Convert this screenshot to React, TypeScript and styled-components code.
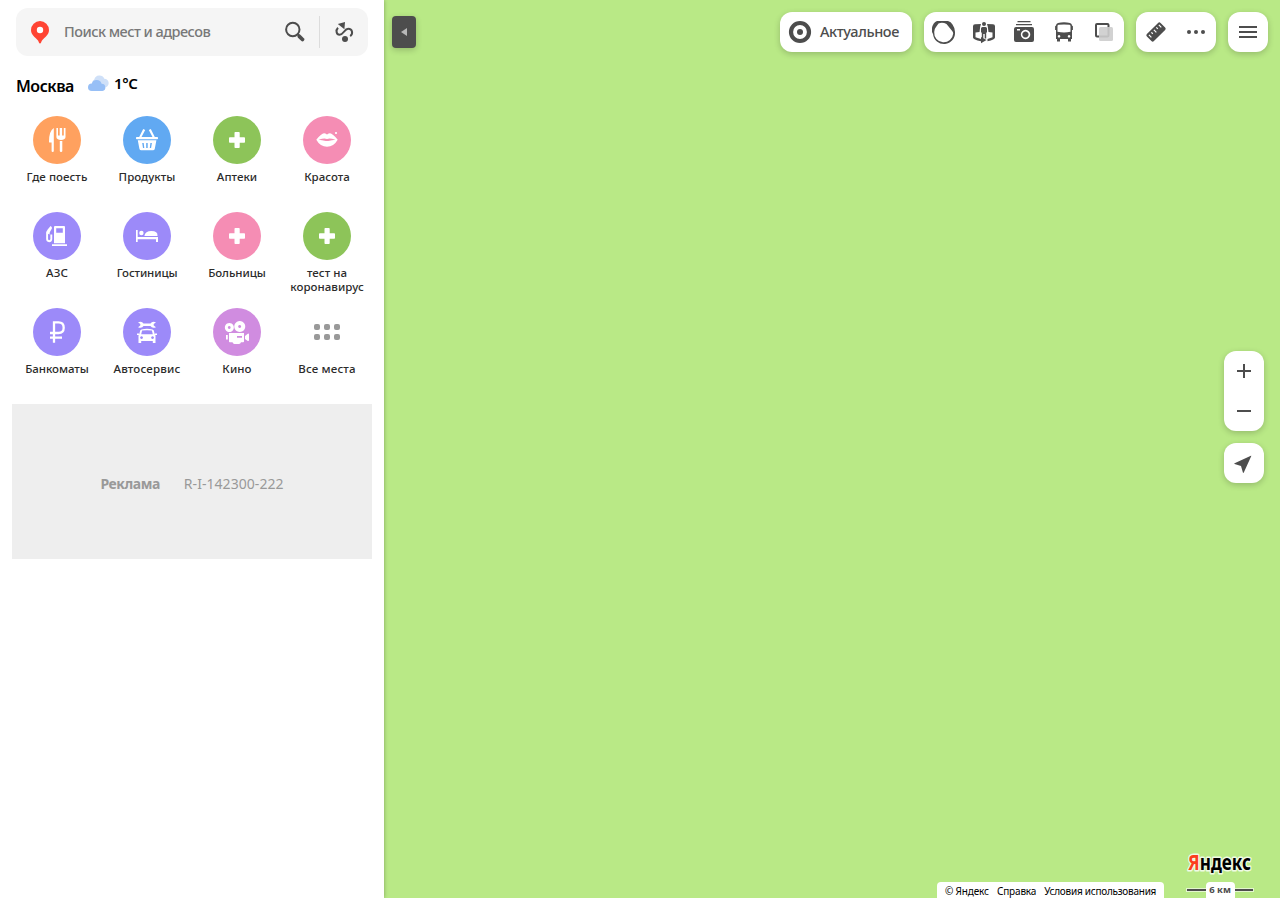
import React from "react";
import styled, { createGlobalStyle } from "styled-components";

const INK = "#4d4d4d";
const SHADOW = "0 2px 6px rgba(0, 0, 0, 0.2)";

const GlobalStyle = createGlobalStyle`
  * { box-sizing: border-box; }
  body { margin: 0; background: #fff; overflow: hidden; font-family: "Noto Sans", "Open Sans", sans-serif; }
  svg { display: block; flex: none; overflow: visible; }
  button { border: 0; padding: 0; margin: 0; background: none; font: inherit; color: inherit; }
`;

const Page = styled.div`
  display: flex;
  width: 1280px;
  height: 898px;
`;

const Sidebar = styled.aside`
  width: 384px;
  flex: none;
  padding: 8px 12px 0;
  background: #fff;
  box-shadow: 0 0 4px rgba(0, 0, 0, 0.3);
  z-index: 1;
`;

const SearchBar = styled.div`
  display: flex;
  align-items: center;
  height: 48px;
  margin: 0 4px;
  border-radius: 12px;
  background: #f5f5f5;
`;

const Placeholder = styled.span<{ $ls: number }>`
  flex: 1;
  padding-bottom: 2px;
  color: #787878;
  font-size: 14.5px;
  font-weight: 500;
  letter-spacing: ${(p) => p.$ls}px;
  white-space: nowrap;
`;

const Divider = styled.i`
  width: 1px;
  height: 32px;
  background: #dcdcdc;
`;

const CityRow = styled.div`
  display: flex;
  height: 60px;
  padding: 0 4px;
`;

const City = styled.span<{ $ls: number }>`
  width: 72px;
  padding-top: 20px;
  font-size: 16px;
  line-height: 20px;
  font-weight: 600;
  letter-spacing: ${(p) => p.$ls}px;
`;

const Weather = styled.span`
  display: flex;
  gap: 6px;
  padding-top: 17px;
  height: 38px;
  font-size: 15px;
  line-height: 20px;
  font-weight: 600;
  letter-spacing: -0.3px;
`;

const Categories = styled.div`
  display: grid;
  grid-template-columns: repeat(4, 90px);
  grid-auto-rows: 96px;
`;

const Category = styled.button`
  display: flex;
  flex-direction: column;
  align-items: center;
  gap: 6px;
`;

const Disc = styled.span<{ $color: string }>`
  width: 48px;
  height: 48px;
  border-radius: 50%;
  background: ${(p) => p.$color};
`;

const Label = styled.span<{ $ls: number }>`
  color: #2b2b2b;
  font-size: 11.5px;
  line-height: 14px;
  font-weight: 550;
  letter-spacing: ${(p) => p.$ls}px;
  text-align: center;
  white-space: pre;
`;

const Ad = styled.div`
  display: flex;
  align-items: center;
  justify-content: center;
  gap: 24px;
  height: 155px;
  padding-top: 4px;
  background: #eee;
  color: #999;
  font-size: 14px;
  line-height: 20px;
`;

const AdTitle = styled.b`
  font-weight: 700;
  letter-spacing: -0.45px;
`;

const AdCode = styled.span`
  letter-spacing: 0.05px;
`;

const MapArea = styled.main`
  flex: 1;
  display: flex;
  flex-direction: column;
  justify-content: space-between;
  background: #b9e986;
`;

const TopBar = styled.div`
  display: flex;
  gap: 12px;
  padding: 12px 12px 0 8px;
`;

const Collapse = styled.button`
  display: flex;
  align-items: center;
  justify-content: center;
  width: 24px;
  height: 32px;
  margin: 4px auto 0 0;
  border-radius: 4px;
  background: ${INK};
  box-shadow: ${SHADOW};
`;

const Panel = styled.div<{ $vertical?: boolean }>`
  display: flex;
  flex-direction: ${(p) => (p.$vertical ? "column" : "row")};
  align-items: center;
  border-radius: 12px;
  background: #fff;
  box-shadow: ${SHADOW};
`;

const PanelText = styled.span<{ $ls: number }>`
  width: 92px;
  padding-bottom: 2px;
  color: ${INK};
  font-size: 14.5px;
  font-weight: 550;
  letter-spacing: ${(p) => p.$ls}px;
  white-space: nowrap;
`;

const SideControls = styled.div`
  display: flex;
  flex-direction: column;
  gap: 12px;
  align-self: flex-end;
  margin: 299px 16px auto 0;
`;

const BottomBar = styled.footer`
  display: flex;
  align-items: flex-end;
  justify-content: flex-end;
  gap: 22px;
  padding-right: 26px;
`;

const Copyrights = styled.div`
  display: flex;
  gap: 8px;
  width: 227px;
  height: 16px;
  padding: 0 8px;
  border-radius: 4px 4px 0 0;
  background: #fff;
  color: #000;
  font-size: 10px;
  line-height: 18px;
  white-space: nowrap;
`;

const Notice = styled.span<{ $ls: number }>`
  letter-spacing: ${(p) => p.$ls}px;
`;

const Brand = styled.div`
  display: flex;
  flex-direction: column;
  align-items: center;
  width: 68px;
`;

const Scale = styled.div`
  display: flex;
  align-items: center;
  width: 68px;
  height: 16px;
  padding: 0 1px;
`;

const ScaleLine = styled.i`
  flex: 1;
  height: 2px;
  background: ${INK};
  box-shadow: 0 0 0 1px rgba(255, 255, 255, 0.6);
`;

const ScaleText = styled.span`
  width: 29px;
  height: 16px;
  border-radius: 4px 4px 0 0;
  background: #fff;
  color: ${INK};
  font-size: 9.5px;
  line-height: 15px;
  font-weight: 700;
  text-align: center;
  white-space: nowrap;
`;

const Tool = ({ children }: { children: React.ReactNode }) => (
  <svg width="40" height="40" viewBox="0 0 40 40" fill={INK}>{children}</svg>
);

const plus = <path d="M22.300 16h3.600q.8 0 .8.8v4.500h4.500q.8 0 .8.8v3.800q0 .8-.8.8h-4.500v4.500q0 .8-.8.8h-3.600q-.8 0-.8-.8v-4.500h-4.700q-.8 0-.8-.8v-3.800q0-.8.8-.8h4.700v-4.500q0-.8.8-.8z" />;

const PURPLE = "#9c8af9";
const GREEN = "#8dc459";
const PINK = "#f58db4";

const categories: { label: string; color: string; ls: number; icon: React.ReactNode }[] = [
  {
    label: "Где поесть", color: "#ffa15f", ls: 0.05,
    icon: (
      <>
        <path d="M20.800 12v23q0 1-1.100 1t-1.100-1v-8.500H16.400q-.5 0-.4-1Q16 15 20.800 12z" />
        <path d="M23.400 12h1.600v7.500h1.700V12h2.400v7.500h1.700V12h1.700v9q0 2.500-4.500 3-4.600-.5-4.600-3zM26.800 25h2.500v10q0 1-1.250 1t-1.250-1z" />
      </>
    ),
  },
  {
    label: "Продукты", color: "#61a9f2", ls: 0.05,
    icon: (
      <>
        <path d="m20.200 13 2 1-3.700 7h-2.300zM27.800 13l-2 1 3.700 7h2.300z" />
        <rect x="13" y="21" width="22" height="2.300" rx=".8" />
        <path fillRule="evenodd" d="M14.800 24.300h18.600l-1.600 8.400q-.3 1.600-1.900 1.600H18.300q-1.600 0-1.900-1.600zM19.200 27l.8 5h1.300l-.6-5zm4 0v5h1.500v-5zm4.200 0-.6 5h1.300l.8-5z" />
      </>
    ),
  },
  { label: "Аптеки", color: GREEN, ls: 0.02, icon: plus },
  {
    label: "Красота", color: PINK, ls: 0.02,
    icon: (
      <>
        <path d="M13.300 23.800q5.200-6.500 7.700-6.500 1.200 0 3 1.100 1.800-1.100 3-1.100 2.500 0 7.700 6.500-4 7-10.700 7t-10.700-7z" />
        <path fill={PINK} d="M15.500 23.800q4-1.200 6-1.200 1 .1 2.500.5 1.500-.4 2.500-.5 2 0 6 1.200-4 .5-6 .9-2.500.5-5 0-2-.4-6-.9z" />
        <circle cx="33" cy="17" r="1.100" />
      </>
    ),
  },
  {
    label: "АЗС", color: PURPLE, ls: 0.1,
    icon: (
      <>
        <path fillRule="evenodd" d="M22 14h9q1 0 1 1v16.300H21V15q0-1 1-1zm1.200 2.200v4.500h6.600v-4.500zM19 32.200h15V34H19z" />
        <path d="m18.300 14.600-3.300 4q-.9 1-.9 2.500v6q0 2.100 2 2.100t2.200-2V22.500" fill="none" stroke="#fff" strokeWidth="1.900" />
        <path d="m17.500 15 1.500 1.300-1.800 3.300q-.7 1.200-.7 3L13.300 21z" />
      </>
    ),
  },
  {
    label: "Гостиницы", color: PURPLE, ls: -0.12,
    icon: (
      <>
        <path d="M13 18h1.700v7H35v5h-2v-2.700H14.700V30H13z" />
        <circle cx="18.400" cy="21" r="2.200" />
        <path d="M21.300 24q1-5 7-5 6.700 0 6.200 5z" />
      </>
    ),
  },
  { label: "Больницы", color: PINK, ls: -0.05, icon: plus },
  { label: "тест на\nкоронавирус", color: GREEN, ls: 0.05, icon: plus },
  {
    label: "Банкоматы", color: PURPLE, ls: -0.05,
    icon: <path d="M21 34.700V14.400h4.500q5.200 0 5.200 5.300t-5.200 5.300H17M17 29.700h12" fill="none" stroke="#fff" strokeWidth="2.300" />,
  },
  {
    label: "Автосервис", color: PURPLE, ls: 0.2,
    icon: (
      <>
        <path d="M15 14.200q4-1.500 5.500 1.400h7q1.500-2.900 5.500-1.400l-2.300 1.700v1.700L33 19.300q-4 1.500-5.500-1.200h-7q-1.500 2.700-5.500 1.200l2.300-1.700v-1.700z" />
        <path fillRule="evenodd" d="M18.500 21.400q5.500-1.100 11 0 1 .2 1.300 1.200l.9 3.400q.8.700.8 2v7h-2.700v-2H18.200v2h-2.700v-7q0-1.300.8-2l.9-3.400q.3-1 1.300-1.200zm.6 1.200-.9 3.600h11.600l-.9-3.600q-4.900-.8-9.800 0zm-.6 5.600a1.400 1.400 0 1 0 .1 0zm11 0a1.400 1.400 0 1 0 .1 0z" />
        <path d="M14 25.500h2v1.600h-2zM32 25.500h2v1.600h-2z" />
      </>
    ),
  },
  {
    label: "Кино", color: "#d08ce0", ls: 0.1,
    icon: (
      <>
        <path fillRule="evenodd" d="M16.300 15a4.500 4.500 0 1 0 .1 0zm0 3.100a1.400 1.400 0 1 1-.1 0zM26.700 13a5.500 5.500 0 1 0 .1 0zm0 3.900a1.500 1.500 0 1 1-.1 0zM16 25h15v8.500q0 .8-.8.800H28q-.5 1.700-2 1.700h-4.500q-1.500 0-2-1.700h-2.700q-.8 0-.8-.8zm8 3v1.800h5V28z" />
        <path d="M13 27h1.800v4.500H13zM32 28l2.800-2.300q1.200-.5 1.200.8v5.600q0 1.300-1.200.8L32 31z" />
      </>
    ),
  },
  {
    label: "Все места", color: "transparent", ls: 0.15,
    icon: (
      <g fill="#999">
        {[11, 21, 31].map((x) => [16, 26].map((y) => <rect key={`${x}-${y}`} x={x} y={y} width="6" height="6" rx="2" />))}
      </g>
    ),
  },
];

export default function App() {
  return (
    <Page>
      <GlobalStyle />
      <Sidebar>
        <SearchBar>
          <svg width="48" height="48" viewBox="0 0 48 48">
            <path d="M24 13a9 9 0 0 1 9 9c0 5-4 7-7 10.500-.8 1-1 3-2 3s-1.200-2-2-3C19 29 15 27 15 22a9 9 0 0 1 9-9z" fill="#ff4433" />
            <circle cx="24" cy="22" r="3.200" fill="#fff" />
          </svg>
          <Placeholder $ls={-0.53}>Поиск мест и адресов</Placeholder>
          <svg width="48" height="48" viewBox="0 0 48 48" fill="none" stroke={INK}>
            <circle cx="21.800" cy="21.500" r="6.700" strokeWidth="2" />
            <path d="m26.500 26 1.500 1.500" strokeWidth="2" />
            <path d="m28.300 28.300 3.200 3.200" strokeWidth="3.800" strokeLinecap="round" />
          </svg>
          <Divider />
          <svg width="48" height="48" viewBox="0 0 48 48" fill={INK}>
            <path d="m17.800 16 7.200-2-.6 7.200z" />
            <path d="M18 19.800c-2.600 2.600-1.500 7 1.500 7 4.200 0 4.700-6 8.700-6 4.500 0 5 5.200 2 7.300" fill="none" stroke={INK} strokeWidth="2" />
            <circle cx="25" cy="31" r="3" />
          </svg>
        </SearchBar>
        <CityRow>
          <City $ls={-0.5}>Москва</City>
          <Weather>
            <svg width="20" height="20" viewBox="0 0 20 20">
              <path d="M7 12a3.800 3.800 0 0 1-1-7 5.300 5.300 0 0 1 10-.8A3.900 3.900 0 0 1 16 13z" fill="#cfe0f8" transform="translate(.3 1.500)" />
              <path d="M3.800 18a3.800 3.800 0 0 1 0-7.600 5.200 5.200 0 0 1 9.800.3A3.700 3.700 0 0 1 14.500 18z" fill="#97bff6" />
            </svg>
            1°C
          </Weather>
        </CityRow>
        <Categories>
          {categories.map((c) => (
            <Category key={c.label}>
              <Disc $color={c.color}>
                <svg width="48" height="48" viewBox="0 0 48 48" fill="#fff">{c.icon}</svg>
              </Disc>
              <Label $ls={c.ls}>{c.label}</Label>
            </Category>
          ))}
        </Categories>
        <Ad>
          <AdTitle>Реклама</AdTitle>
          <AdCode>R-I-142300-222</AdCode>
        </Ad>
      </Sidebar>

      <MapArea>
        <TopBar>
          <Collapse>
            <svg width="8" height="8" viewBox="0 0 8 8"><path d="M7 0v8L1 4z" fill="#b8b8b8" /></svg>
          </Collapse>
          <Panel>
            <Tool>
              <circle cx="20" cy="20" r="9" fill="none" stroke={INK} strokeWidth="4.200" />
              <circle cx="20" cy="20" r="3" />
            </Tool>
            <PanelText $ls={-0.4}>Актуальное</PanelText>
          </Panel>
          <Panel>
            <Tool>
              <path fillRule="evenodd" d="M13 9h11q3 .5 4.500 3.500Q31 16 31 20a11 11 0 0 1-22 2q-1.500-2-1-6 1-5.500 5-7zm1.500 2.500L12 15q-1.800 2-1.800 5a9.500 9.500 0 0 0 19 1.500q0-1.500-1-2.500L22.500 12q-4-2-8-.5z" />
            </Tool>
            <Tool>
              <path d="M11 12.200 17 12l-.8 2.800-.7 5.200-4 .6v4.700l5.500 1.700v-2l5.500 3-5.500 3.200V29.300Q9 27.500 9 25.500V14.300q0-2 2-2.100zM29 12.200 23 12l.8 2.800.7 5.200 4 .6v4.700l-5 1.700v2.300q7.500-1.500 7.500-3.800V14.300q0-2-2-2.100z" />
              <circle cx="20" cy="12" r="2" />
              <path d="M18.500 15h3q1.500 0 1.500 1.500V20l-.8 1v5.500h-1.500V22h-1.400v4.500h-1.500V21l-.8-1v-3.500q0-1.500 1.500-1.500z" />
            </Tool>
            <Tool>
              <path d="M13.500 9h13v1.300h-13zM12 12h16v1.300H12z" />
              <path fillRule="evenodd" d="M12 15h16q2 0 2 2v11q0 2-2 2H12q-2 0-2-2V17q0-2 2-2zm1 2v1.500h3V17zm8.500.8a4.700 4.700 0 1 0 .1 0zm0 1.600a3.100 3.100 0 1 1-.1 0z" />
            </Tool>
            <Tool>
              <path fillRule="evenodd" d="M14 11q6-1.500 12 0 2 .5 2 2.500l.9.800V18h-.9v9h-1v2.500h-3V27h-8v2.500h-3V27h-1v-9h-.9v-3.700l.9-.8q0-2 2-2.500zm-.5 3v5.800q6.500 1.200 13 0V14q0-1-1-1.200-5.500-.8-11 0-1 .2-1 1.200zM15 23a1.300 1.300 0 1 0 .1 0zm10 0a1.300 1.300 0 1 0 .1 0z" />
            </Tool>
            <Tool>
              <rect x="12" y="12" width="12.500" height="12.500" rx="1" fill="none" stroke={INK} strokeWidth="2" />
              <rect x="15" y="15" width="14" height="14" rx="1.500" fill="#cdcdcd" fillOpacity=".9" />
            </Tool>
          </Panel>
          <Panel>
            <Tool>
              <g transform="rotate(-45 20 20)">
                <rect x="10.300" y="15" width="19.400" height="10" rx="1.800" />
                <path d="M13 17v3.500M16.500 17v2M20 17v3.500M23.500 17v2M27 17v3.500" stroke="#fff" strokeWidth="1.200" />
              </g>
            </Tool>
            <Tool>
              <circle cx="13" cy="20" r="2" /><circle cx="20" cy="20" r="2" /><circle cx="27" cy="20" r="2" />
            </Tool>
          </Panel>
          <Panel>
            <Tool><path d="M11 14h18v2H11zM11 19h18v2H11zM11 24h18v2H11z" /></Tool>
          </Panel>
        </TopBar>
        <SideControls>
          <Panel $vertical>
            <Tool><path d="M13 19h6v-6h2v6h6v2h-6v6h-2v-6h-6z" /></Tool>
            <Tool><path d="M13 19h14v2H13z" /></Tool>
          </Panel>
          <Panel>
            <Tool><path d="M27.300 13q.3-.5-.4-.2L10.600 20.300q-.8.500 0 .8l6.400 2 1.900 6.500q.4.700.9 0z" /></Tool>
          </Panel>
        </SideControls>
        <BottomBar>
          <Copyrights>
            <Notice $ls={-0.15}>© Яндекс</Notice>
            <Notice $ls={-0.15}>Справка</Notice>
            <Notice $ls={-0.25}>Условия использования</Notice>
          </Copyrights>
          <Brand>
            <svg width="68" height="46" viewBox="0 0 68 46" fontFamily="Noto Sans, sans-serif" fontWeight="700">
              <text x="2" y="33.500" fontSize="21" textLength="63" lengthAdjust="spacingAndGlyphs" stroke="#fff" strokeWidth="3" strokeOpacity=".8" strokeLinejoin="round" paintOrder="stroke"><tspan fill="#fc3f1d">Я</tspan>ндекс</text>
            </svg>
            <Scale>
              <ScaleLine /><ScaleText>6 км</ScaleText><ScaleLine />
            </Scale>
          </Brand>
        </BottomBar>
      </MapArea>
    </Page>
  );
}
